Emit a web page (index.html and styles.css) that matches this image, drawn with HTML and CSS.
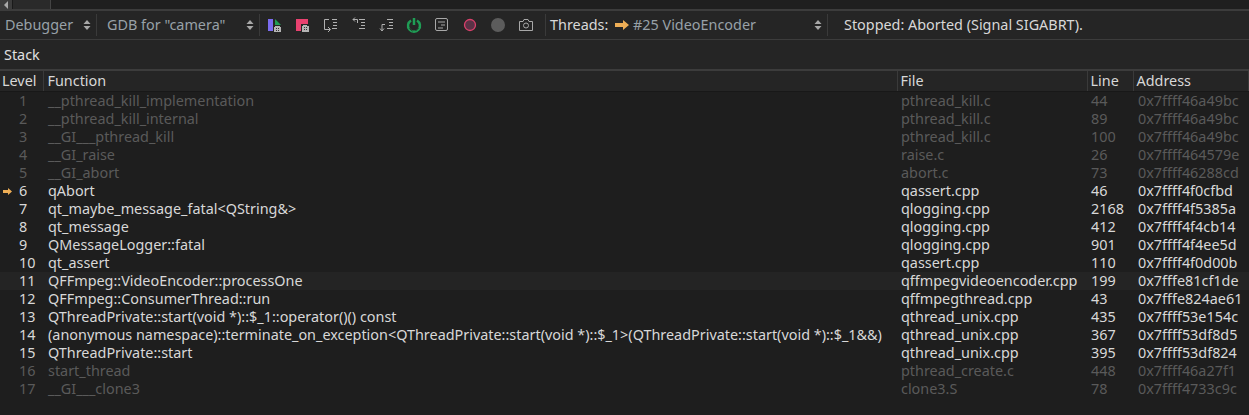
FILE: index.html
```html
<!DOCTYPE html>
<html lang="en">
<head>
<meta charset="utf-8">
<title>Debugger</title>
<link rel="stylesheet" href="styles.css">
</head>
<body>
<div class="tabstrip"><div class="tab"><span class="tab-btn"><svg width="6" height="8" viewBox="0 0 6 8"><path d="M5 0v8L1 4z" fill="#aaa"/></svg></span></div></div>
<div class="toolbar">
  <div class="combo combo-a"><span>Debugger</span><svg class="updown" width="8" height="12" viewBox="0 0 8 12"><path d="M4 1l3.500 4h-7zM4 11L.5 7h7z" fill="#a8a8a8"/></svg></div>
  <i class="sep"></i>
  <div class="combo combo-b"><span>GDB for "camera"</span><svg class="updown" width="8" height="12" viewBox="0 0 8 12"><path d="M4 1l3.500 4h-7zM4 11L.5 7h7z" fill="#a8a8a8"/></svg></div>
  <i class="sep"></i>
  <div class="icons">
    <svg width="28" height="16" viewBox="0 0 28 16"><rect x="8" y="2" width="5" height="12" fill="#7b6cf0"/><path d="M15 2l6 6h-6z" fill="#1f9d55"/><path d="M15 9h5v1h1v5h-7v-5h1z" fill="#b4b4b4"/><path d="M16 11h1v1h-1zM18 11h1v1h-1zM16 13h1v1h-1zM18 13h1v1h-1z" fill="#333"/></svg>
    <svg width="28" height="16" viewBox="0 0 28 16"><path d="M8 2h12v5h-7v7H8z" fill="#e8416f"/><path d="M15 8h4v1h2v6h-7V9h1z" fill="#b4b4b4"/><path d="M16 10h1v1h-1zM18 10h1v1h-1zM16 12h1v1h-1zM18 12h1v1h-1z" fill="#333"/></svg>
    <svg width="28" height="16" viewBox="0 0 28 16" fill="none" stroke="#b0b0b0"><path d="M13 2.500H8.500v10H14M12 15l2.500-2.500-2.500-2.500M16 2.500h5M17 5.500h4M17 8.500h4M16 11.500h5"/></svg>
    <svg width="28" height="16" viewBox="0 0 28 16" fill="none" stroke="#b0b0b0"><path d="M13.500 6V2.500H9M11 .5L9 2.500l2 2M15 2.500h6M17 5.500h4M17 8.500h4M15 11.500h6"/></svg>
    <svg width="28" height="16" viewBox="0 0 28 16" fill="none" stroke="#b0b0b0"><path d="M13 7.500H10v6M8 11.500l2 2.500 2-2.500M15 2.500h6M17 5.500h4M17 8.500h4M15 11.500h6"/></svg>
    <svg width="28" height="16" viewBox="0 0 28 16" fill="none" stroke="#1f9d55" stroke-width="2.500"><path d="M11 3.500a6 6 0 1 0 6 0M14 1v7"/><path d="M9.500 11.500l3 2.500M15.500 14l3-3" stroke="#252525" stroke-width="1"/></svg>
    <svg width="28" height="16" viewBox="0 0 28 16" fill="none" stroke="#a8a8a8"><rect x="7.500" y="1.500" width="12" height="12" rx="1.500"/><path d="M10 5h7M13 8h4M10 11h5"/></svg>
    <svg width="28" height="16" viewBox="0 0 28 16"><circle cx="14" cy="8" r="5.500" fill="#5a3246" stroke="#d9406b" stroke-width="1.300"/></svg>
    <svg width="28" height="16" viewBox="0 0 28 16"><circle cx="14" cy="8" r="7" fill="#5c5c5c"/></svg>
    <svg width="28" height="16" viewBox="0 0 28 16" fill="none" stroke="#a8a8a8"><path d="M7.500 4.500H11l1-2h4l1 2h3.500v9h-13z"/><circle cx="14" cy="8.500" r="2.500"/></svg>
  </div>
  <i class="sep"></i>
  <span class="threads-label">Threads:</span>
  <div class="combo combo-t">
    <svg class="arrow" width="14" height="10" viewBox="0 0 14 10"><path d="M0 3h8V0l6 5-6 5V7H0z" fill="#eeae56"/></svg>
    <span>#25 VideoEncoder</span>
    <svg class="updown" width="8" height="12" viewBox="0 0 8 12"><path d="M4 1l3.500 4h-7zM4 11L.5 7h7z" fill="#a8a8a8"/></svg>
  </div>
  <i class="sep"></i>
  <span class="status">Stopped: Aborted (Signal SIGABRT).</span>
</div>
<div class="titlebar">Stack</div>
<table class="stack">
  <colgroup><col class="c-level"><col class="c-fn"><col class="c-file"><col class="c-line"><col class="c-addr"></colgroup>
  <thead><tr><th>Level</th><th>Function</th><th>File</th><th>Line</th><th>Address</th></tr></thead>
  <tbody>
    <tr class="dim"><td>1</td><td>__pthread_kill_implementation</td><td>pthread_kill.c</td><td>44</td><td>0x7ffff46a49bc</td></tr>
    <tr class="dim"><td>2</td><td>__pthread_kill_internal</td><td>pthread_kill.c</td><td>89</td><td>0x7ffff46a49bc</td></tr>
    <tr class="dim"><td>3</td><td>__GI___pthread_kill</td><td>pthread_kill.c</td><td>100</td><td>0x7ffff46a49bc</td></tr>
    <tr class="dim"><td>4</td><td>__GI_raise</td><td>raise.c</td><td>26</td><td>0x7ffff464579e</td></tr>
    <tr class="dim"><td>5</td><td>__GI_abort</td><td>abort.c</td><td>73</td><td>0x7ffff46288cd</td></tr>
    <tr><td class="current"><svg class="cur-arrow" width="9" height="7" viewBox="0 0 9 7"><path d="M0 2h5V0l4 3.500L5 7V5H0z" fill="#eeae56"/></svg>6</td><td>qAbort</td><td>qassert.cpp</td><td>46</td><td>0x7ffff4f0cfbd</td></tr>
    <tr><td>7</td><td>qt_maybe_message_fatal&lt;QString&amp;&gt;</td><td>qlogging.cpp</td><td>2168</td><td>0x7ffff4f5385a</td></tr>
    <tr><td>8</td><td>qt_message</td><td>qlogging.cpp</td><td>412</td><td>0x7ffff4f4cb14</td></tr>
    <tr><td>9</td><td>QMessageLogger::fatal</td><td>qlogging.cpp</td><td>901</td><td>0x7ffff4f4ee5d</td></tr>
    <tr><td>10</td><td>qt_assert</td><td>qassert.cpp</td><td>110</td><td>0x7ffff4f0d00b</td></tr>
    <tr class="hover"><td>11</td><td>QFFmpeg::VideoEncoder::processOne</td><td>qffmpegvideoencoder.cpp</td><td>199</td><td>0x7fffe81cf1de</td></tr>
    <tr><td>12</td><td>QFFmpeg::ConsumerThread::run</td><td>qffmpegthread.cpp</td><td>43</td><td>0x7fffe824ae61</td></tr>
    <tr><td>13</td><td>QThreadPrivate::start(void *)::$_1::operator()() const</td><td>qthread_unix.cpp</td><td>435</td><td>0x7ffff53e154c</td></tr>
    <tr><td>14</td><td>(anonymous namespace)::terminate_on_exception&lt;QThreadPrivate::start(void *)::$_1&gt;(QThreadPrivate::start(void *)::$_1&amp;&amp;)</td><td>qthread_unix.cpp</td><td>367</td><td>0x7ffff53df8d5</td></tr>
    <tr><td>15</td><td>QThreadPrivate::start</td><td>qthread_unix.cpp</td><td>395</td><td>0x7ffff53df824</td></tr>
    <tr class="dim"><td>16</td><td>start_thread</td><td>pthread_create.c</td><td>448</td><td>0x7ffff46a27f1</td></tr>
    <tr class="dim"><td>17</td><td>__GI___clone3</td><td>clone3.S</td><td>78</td><td>0x7ffff4733c9c</td></tr>
  </tbody>
</table>
</body>
</html>
```

FILE: styles.css
```css
html, body { margin: 0; padding: 0; height: 100%; overflow: hidden; }
body { background: #1e1e1e; color: #d8d8d8; font: 14.4px/18px "Noto Sans", sans-serif; width: 1249px; }
.tabstrip { height: 9px; background: #1f1f1f; border-bottom: 2px solid #3c3c3c; overflow: hidden; }
.tab { width: 50px; height: 9px; background: #2a2a2a; border-right: 1px solid #444; }
.tab-btn { display: block; width: 12px; height: 9px; background: #3c3c3c; border-right: 1px solid #1a1a1a; text-align: center; line-height: 7px; }
.toolbar { height: 28px; background: #252525; border-bottom: 1px solid #3c3c3c; display: flex; align-items: center; color: #98a1a8; }
.combo { display: flex; align-items: center; height: 100%; padding-left: 5px; box-sizing: border-box; }
.combo span { flex: 1; white-space: nowrap; }
.combo .updown { margin-right: 5px; }
.combo-a { width: 96px; }
.combo-b { width: 162px; padding-left: 10px; }
.combo-t { flex: none; width: 220px; padding-left: 8px; }
.combo-t .arrow { margin-right: 4px; }
.sep { width: 1px; height: 22px; background: #3a3a3a; flex: none; }
.icons { display: flex; align-items: center; width: 285px; flex: none; }
.threads-label { color: #d8d8d8; width: 57px; padding-left: 4px; white-space: nowrap; }
.status { color: #d8d8d8; padding-left: 16px; white-space: nowrap; }
.titlebar { height: 29px; line-height: 29px; background: #252525; border-bottom: 2px solid #3c3c3c; padding-left: 4px; color: #e0e0e0; }
.stack { width: 1249px; border-collapse: collapse; table-layout: fixed; }
.c-level { width: 43px; } .c-fn { width: 854px; } .c-file { width: 190px; } .c-line { width: 46px; }
.stack th { height: 20px; padding: 0 0 0 3px; background: #252525; border-bottom: 1px solid #181818; border-right: 1px solid #3a3a3a; font-weight: 400; text-align: left; color: #d8d8d8; }
.stack th:first-child { padding-left: 2px; }
.stack th:nth-child(2) { padding-left: 4px; }
.stack td { height: 18px; padding: 0 0 0 5px; white-space: nowrap; overflow: hidden; color: #d8d8d8; }
.stack td:first-child { padding-left: 19px; position: relative; }
.stack td:nth-child(3), .stack td:nth-child(4) { padding-left: 4px; }
.dim td { color: #5a5a5a; }
.hover td { background: #242424; }
.cur-arrow { position: absolute; left: 3px; top: 6px; }
```
